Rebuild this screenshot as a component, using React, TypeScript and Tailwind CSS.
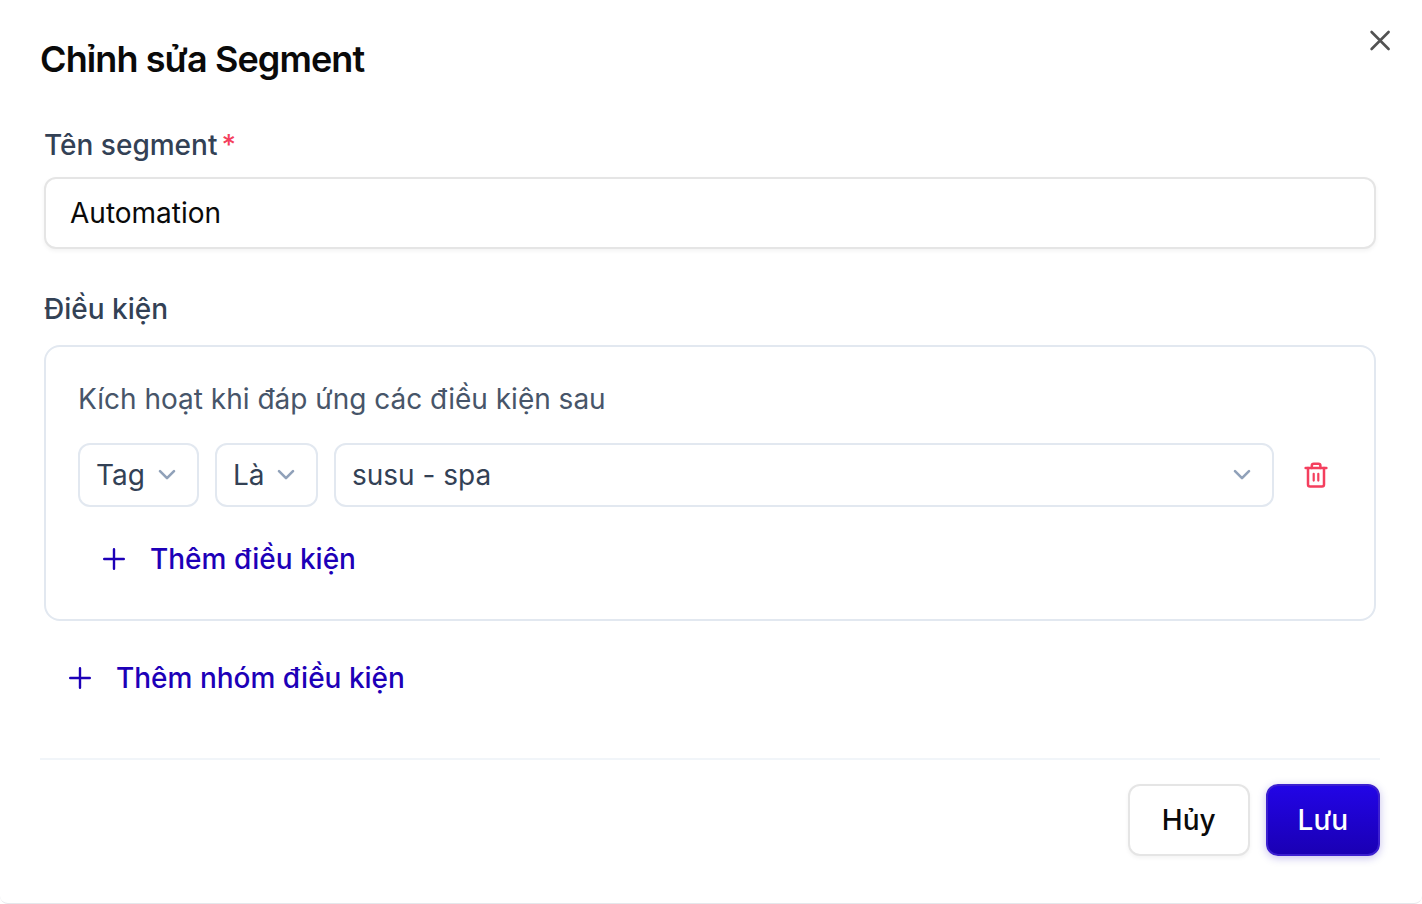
import { useState } from 'react';
import type { ReactNode } from 'react';

function CloseIcon() {
  return (
    <svg className="h-6 w-6" viewBox="0 0 24 24" fill="none" stroke="currentColor" strokeWidth="2.6" strokeLinecap="round">
      <path d="M3.6 4l17 17M20.6 4l-17 17" />
    </svg>
  );
}

function PlusIcon() {
  return (
    <svg className="h-6 w-6" viewBox="0 0 24 24" fill="none" stroke="currentColor" strokeWidth="2.4" strokeLinecap="round">
      <path d="M12 2.2v19.6M2.2 12h19.6" />
    </svg>
  );
}

function ChevronIcon() {
  return (
    <svg
      className="pointer-events-none absolute top-[22px] right-[22px] h-5 w-5 text-slate-400"
      viewBox="0 0 20 20"
      fill="none"
      stroke="currentColor"
      strokeWidth="2.6"
      strokeLinecap="round"
      strokeLinejoin="round"
    >
      <path d="M3 6.2l7 7 7-7" />
    </svg>
  );
}

function TrashIcon() {
  return (
    <svg className="h-7 w-6" viewBox="0 0 24 28" fill="none" stroke="currentColor" strokeWidth="2.5" strokeLinecap="round" strokeLinejoin="round">
      <path d="M1.6 7h20.8" />
      <path d="M4 7v16.4a2 2 0 0 0 2 2h12a2 2 0 0 0 2-2V7" />
      <path d="M7.8 7V4.8a2 2 0 0 1 2-2h4.6a2 2 0 0 1 2 2V7" />
      <path strokeWidth="2.2" d="M9.7 12.8v6.8M14.3 12.8v6.8" />
    </svg>
  );
}

interface SelectBoxProps {
  label: string;
  options: string[];
  className?: string;
}

function SelectBox({ label, options, className }: SelectBoxProps) {
  return (
    <div className={`relative ${className ?? ''}`}>
      <select
        aria-label={label}
        className="h-16 w-full appearance-none rounded-xl border-2 border-slate-200 bg-white pr-12 pl-4 text-[#334155] focus:outline-none"
      >
        {options.map((option) => (
          <option key={option}>{option}</option>
        ))}
      </select>
      <ChevronIcon />
    </div>
  );
}

function AddButton({ children }: { children: ReactNode }) {
  return (
    <button type="button" className="flex h-18 items-center gap-6 px-6 font-medium text-[#1d00b8]">
      <PlusIcon />
      {children}
    </button>
  );
}

export default function App() {
  const [name, setName] = useState('Automation');

  return (
    <div
      role="dialog"
      aria-labelledby="dialog-title"
      className="relative min-h-screen rounded-b-lg border-b border-gray-200 bg-white pt-10 pr-[42px] pb-10 pl-10 font-[Inter,sans-serif] text-[28px] leading-8 [font-optical-sizing:none]"
    >
      <button type="button" aria-label="Đóng" className="absolute top-7 right-[30px] text-[#525252]">
        <CloseIcon />
      </button>

      <h2 id="dialog-title" className="text-4xl leading-[38px] font-semibold tracking-tight text-neutral-950">
        Chỉnh sửa Segment
      </h2>

      <form onSubmit={(e) => e.preventDefault()}>
        <div className="px-1 pt-[51px]">
          <label htmlFor="segment-name" className="flex gap-1 font-medium text-[#334155]">
            Tên segment
            <span className="text-[#f43f5e]">*</span>
          </label>
          <input
            id="segment-name"
            type="text"
            value={name}
            onChange={(e) => setName(e.target.value)}
            className="mt-4 h-18 w-full rounded-xl border-2 border-neutral-200 bg-white px-6 text-neutral-950 shadow-[0_2px_4px_rgba(0,0,0,0.05)] focus:outline-none"
          />

          <fieldset className="mt-11">
            <legend className="font-medium text-[#334155]">Điều kiện</legend>
            <div className="mt-5 rounded-2xl border-2 border-slate-200 px-8 pt-9 pb-6">
              <p className="text-[#475569]">Kích hoạt khi đáp ứng các điều kiện sau</p>
              <div className="mt-7 flex items-center gap-4">
                <SelectBox label="Trường" options={['Tag']} className="w-[121px]" />
                <SelectBox label="Toán tử" options={['Là']} className="w-[103px]" />
                <SelectBox label="Giá trị" options={['susu - spa']} className="flex-1" />
                <button type="button" aria-label="Xóa điều kiện" className="mx-3.5 text-[#f43f5e]">
                  <TrashIcon />
                </button>
              </div>
              <div className="mt-4">
                <AddButton>Thêm điều kiện</AddButton>
              </div>
            </div>
          </fieldset>

          <div className="mt-[21px]">
            <AddButton>Thêm nhóm điều kiện</AddButton>
          </div>
        </div>

        <div className="mt-11 flex justify-end gap-4 border-t-2 border-slate-100 pt-6">
          <button
            type="button"
            className="h-18 rounded-xl border-2 border-neutral-200 bg-white px-8 font-medium text-neutral-950 shadow-[0_2px_4px_rgba(0,0,0,0.05)]"
          >
            Hủy
          </button>
          <button
            type="submit"
            className="h-18 rounded-xl border-2 border-[#3c20d0] bg-linear-to-b from-[#2205e6] to-[#1a00b4] px-[30px] font-medium text-white shadow-[0_2px_8px_rgba(29,0,184,0.25)]"
          >
            Lưu
          </button>
        </div>
      </form>
    </div>
  );
}
